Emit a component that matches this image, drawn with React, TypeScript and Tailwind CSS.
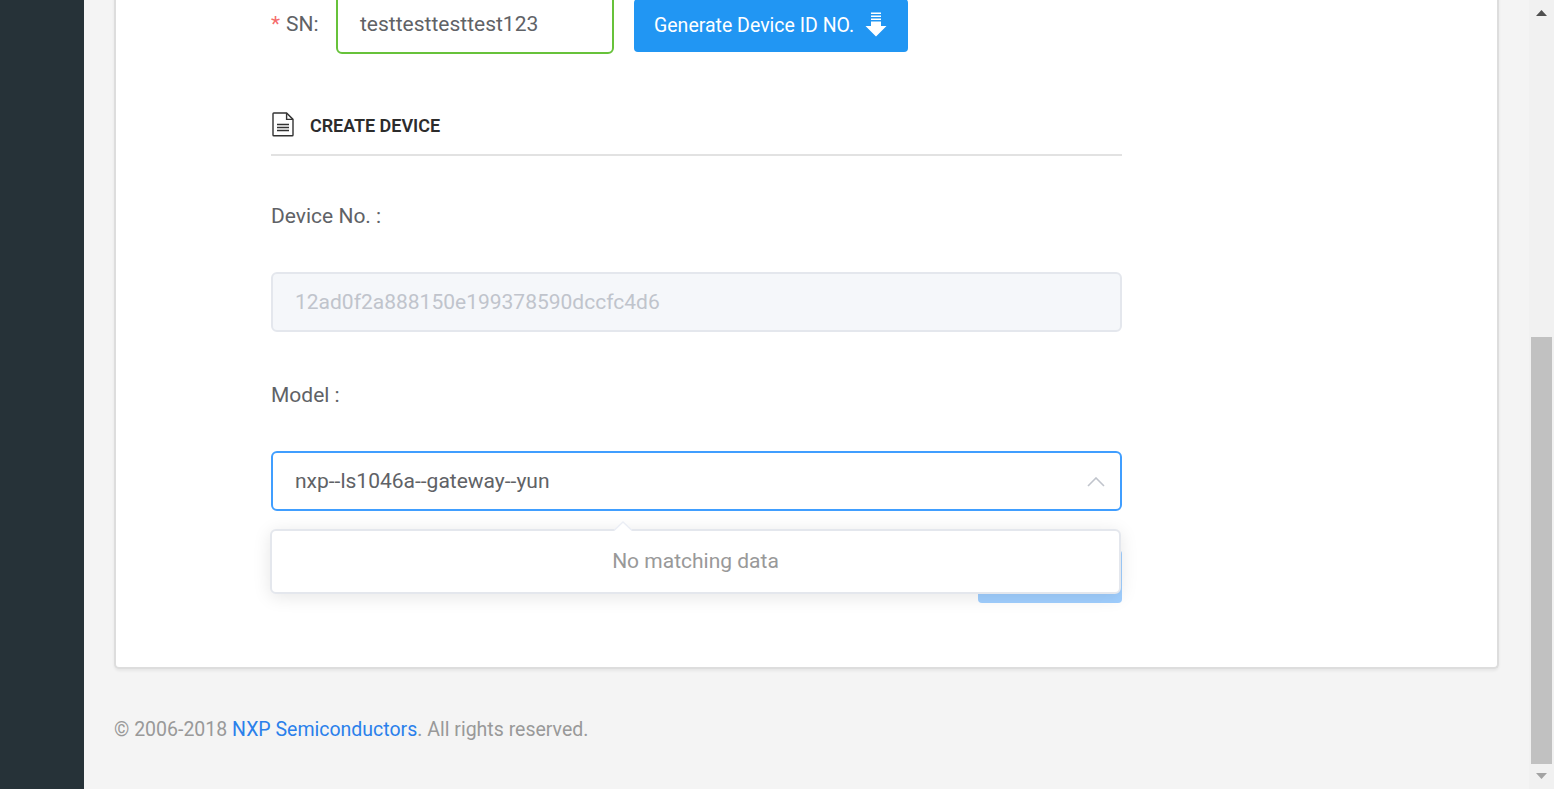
import React from "react";

function DocumentIcon() {
  return (
    <svg className="ml-px h-[25px] w-[22px] shrink-0" viewBox="0 0 22 25" fill="none" stroke="#333333" strokeWidth="1.4">
      <path d="M1.8 1H14.6L21 7.4V23Q21 23.8 20.2 23.8H1.8Q1 23.8 1 23V1.8Q1 1 1.8 1Z" />
      <path d="M14.6 1.2V7.4H21" />
      <path d="M5 12.5H17M5 15.5H17M5 18.5H17" />
    </svg>
  );
}

function DownloadIcon() {
  return (
    <svg className="-mt-[2px] ml-[11px] h-[25px] w-[22px] shrink-0" viewBox="0 0 22 25" fill="#ffffff">
      <path d="M6 0.5H16V2H6ZM6 3.5H16V5H6ZM6 6.5H16V8H6Z" />
      <path d="M6 9.5H16V14H21.5L11 24.6L0.5 14H6Z" />
    </svg>
  );
}

function Scrollbar() {
  return (
    <div className="flex h-full w-[25px] shrink-0 flex-col items-center bg-[#f1f1f1]">
      <svg className="mt-[10px] h-[6px] w-[11px]" viewBox="0 0 11 6" fill="#505050">
        <path d="M5.5 0L11 6H0Z" />
      </svg>
      <div className="mt-[321px] h-[427px] w-[21px] bg-[#c1c1c1]" />
      <svg className="mt-[9px] h-[6px] w-[11px]" viewBox="0 0 11 6" fill="#a3a3a3">
        <path d="M0 0H11L5.5 6Z" />
      </svg>
    </div>
  );
}

export default function App() {
  return (
    <div className="flex h-[789px] w-full overflow-hidden bg-[#f4f4f4] font-['Roboto',sans-serif] text-[21px] text-[#606266]">
      <aside className="w-[84px] shrink-0 bg-[#263238]" />
      <main className="min-w-0 flex-1 pl-[30px] pr-[30px]">
        <section className="-mt-[6px] h-[675px] rounded-b-[5px] border-2 border-t-0 border-[#dddddd] bg-white pl-[155px] shadow-[0_2px_3px_rgba(0,0,0,0.06)]">
          <div className="flex w-[851px] items-start">
            <label className="w-[65px] shrink-0 whitespace-nowrap pt-[10px] leading-[40px]">
              <span className="mr-[6px] text-[#f56c6c]">*</span>SN:
            </label>
            <div className="flex h-[60px] w-[278px] items-center rounded-[6px] border-2 border-[#67c23a] px-[22px] pt-[2px]">
              testtesttesttest123
            </div>
            <button className="ml-5 mt-[5px] flex h-[53px] w-[274px] items-center rounded-[4px] bg-[#2196f3] pl-5 text-[19.5px] text-white">
              <span className="whitespace-nowrap">Generate Device ID NO.</span>
              <DownloadIcon />
            </button>
          </div>

          <div className="mt-[52px] flex h-[50px] w-[851px] items-center border-b-2 border-[#e2e2e2] pb-[11px]">
            <DocumentIcon />
            <h2 className="ml-4 pt-[2px] text-[18px] font-semibold tracking-[-0.05px] text-[#2c2c2c]">CREATE DEVICE</h2>
          </div>

          <div className="mt-[30px] h-[60px] leading-[60px]">Device No. :</div>
          <div className="mt-[26px] flex h-[60px] w-[851px] items-center rounded-[6px] border-2 border-[#e4e7ed] bg-[#f5f7fa] px-[22px] pt-[2px] text-[#c0c4cc]">
            12ad0f2a888150e199378590dccfc4d6
          </div>

          <div className="mt-[33px] h-[60px] leading-[60px]">Model :</div>
          <div className="relative mt-[26px] w-[851px]">
            <div className="flex h-[60px] items-center justify-between rounded-[6px] border-2 border-[#409eff] px-[22px] pt-[2px]">
              <span>nxp--ls1046a--gateway--yun</span>
              <svg className="-mr-[7px] h-[10px] w-[18px]" viewBox="0 0 18 10" fill="none" stroke="#c0c4cc" strokeWidth="1.6">
                <path d="M1 9L9 1L17 9" />
              </svg>
            </div>
            <div className="absolute -left-px top-[78px] z-10 flex h-[65px] w-[851px] items-center justify-center rounded-[6px] border-2 border-[#e4e7ed] bg-white text-[#999999] shadow-[0_3px_18px_rgba(0,0,0,0.1)]">
              No matching data
              <svg className="absolute -top-[10px] left-[341px] h-[11px] w-[20px]" viewBox="0 0 20 11">
                <path d="M1 10L10 1L19 10V11H1Z" fill="#ffffff" />
                <path d="M1 9.5L10 1L19 9.5" fill="none" stroke="#ebeef5" strokeWidth="1.4" />
              </svg>
            </div>
          </div>
          <div className="mt-[39px] flex w-[851px] justify-end">
            <div className="h-[53px] w-[144px] rounded-[4px] bg-[#a0cfff]" />
          </div>
        </section>
        <footer className="mt-[46px] text-[19.5px] leading-[30px] text-[#999999]">
          © 2006-2018 <a className="text-[#2a80eb]">NXP Semiconductors</a>. All rights reserved.
        </footer>
      </main>
      <Scrollbar />
    </div>
  );
}
